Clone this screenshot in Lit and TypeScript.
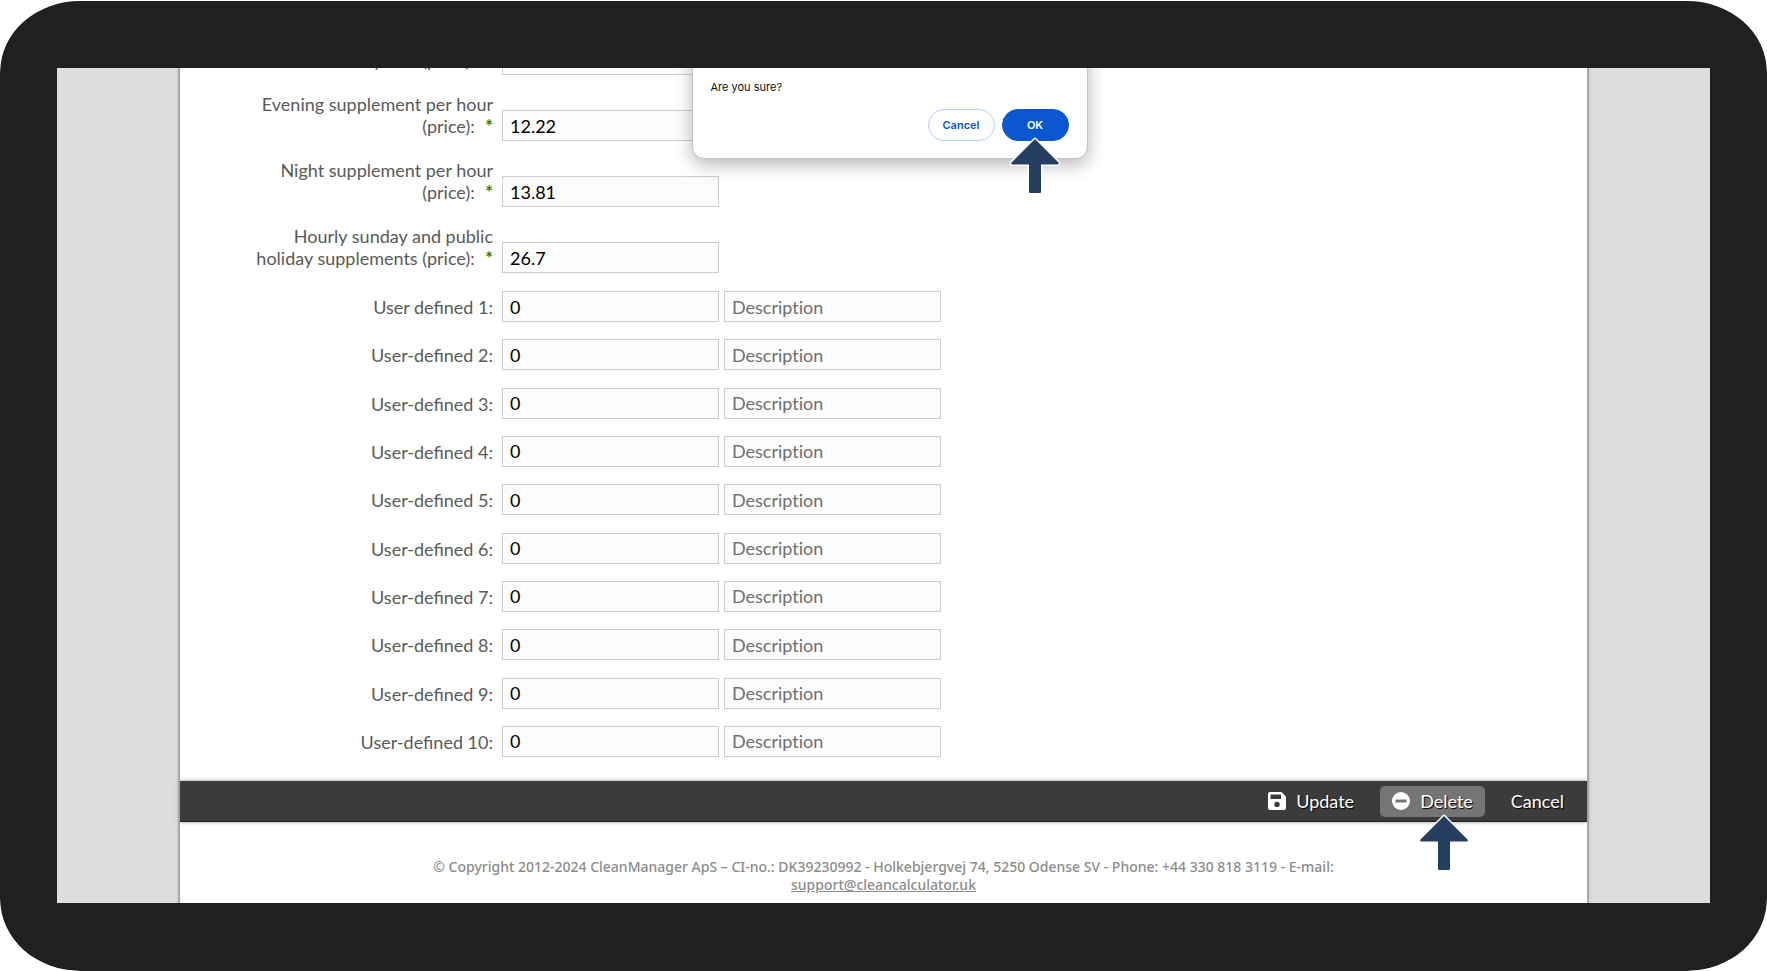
import { LitElement, html, css } from "lit";
import { customElement } from "lit/decorators.js";

interface PriceField {
  id: string;
  lines: string[];
  value: string;
}

const prices: PriceField[] = [
  { id: "hourly", lines: ["Hourly rate (price):"], value: "" },
  { id: "evening", lines: ["Evening supplement per hour", "(price):"], value: "12.22" },
  { id: "night", lines: ["Night supplement per hour", "(price):"], value: "13.81" },
  { id: "sunday", lines: ["Hourly sunday and public", "holiday supplements (price):"], value: "26.7" },
];

const custom = Array.from({ length: 10 }, (_, i) => ({
  id: `custom-${i + 1}`,
  label: i === 0 ? "User defined 1:" : `User-defined ${i + 1}:`,
}));

const pointer = html`
  <svg class="pointer" viewBox="0 0 54 60" width="54" height="60" aria-hidden="true">
    <path
      d="M27 4 L50.5 27.5 Q51.5 29.5 49.5 29.5 H33 V57 Q33 58 32 58 H22 Q21 58 21 57 V29.5 H4.5 Q2.500 29.5 3.5 27.5 Z"
      fill="#263f61" stroke="#fff" stroke-width="3" stroke-linejoin="round" paint-order="stroke" />
  </svg>
`;

const saveIcon = html`
  <svg viewBox="0 0 18 18" width="18" height="18" aria-hidden="true">
    <path fill="currentColor" fill-rule="evenodd"
      d="M2 0 H13.5 L18 4.5 V16 Q18 18 16 18 H2 Q0 18 0 16 V2 Q0 0 2 0 Z M3 2.500 Q2.500 2.500 2.500 3 V6.500 Q2.500 7 3 7 H12.500 Q13 7 13 6.500 V3 Q13 2.500 12.500 2.500 Z M9 9.700 A2.700 2.700 0 1 0 9 15.100 A2.700 2.700 0 1 0 9 9.700 Z" />
  </svg>
`;

const minusIcon = html`
  <svg viewBox="0 0 18 18" width="18" height="18" aria-hidden="true">
    <path fill="currentColor" fill-rule="evenodd"
      d="M9 0 A9 9 0 1 0 9 18 A9 9 0 1 0 9 0 Z M4 7.500 H14 Q14.600 7.500 14.600 8.100 V9.900 Q14.600 10.500 14 10.500 H4 Q3.400 10.500 3.400 9.900 V8.100 Q3.400 7.500 4 7.500 Z" />
  </svg>
`;

@customElement("price-form")
export class PriceForm extends LitElement {
  static styles = css`
    :host { display: flex; flex: 1; min-height: 0; }
    form { display: flex; flex-direction: column; flex: 1; margin-top: -41px; padding-bottom: 24px; }
    .row { display: grid; grid-template-columns: 317px 217px 217px; column-gap: 5px; align-items: end; }
    .tall { min-height: 48px; margin-bottom: 18px; }
    .custom { display: flex; flex-direction: column; justify-content: space-between; flex: 1; }
    label { padding-bottom: 4px; margin-right: 4px; line-height: 22px; text-align: right; color: #5a5a5a; }
    .line { display: block; }
    .star { color: #2f7d12; font-weight: 700; margin-left: 6px; }
    input {
      box-sizing: border-box; width: 100%; height: 31px; margin: 0; padding: 0 7px;
      border: 1px solid #ccc; border-radius: 0; background: #fcfcfc; color: #000; font: inherit;
      font-variant-ligatures: none;
    }
    input::placeholder { color: #707070; opacity: 1; }
  `;

  render() {
    return html`
      <form>
        ${prices.map((f) => html`
          <div class="row tall">
            <label for=${f.id}>
              ${f.lines.map((text, i) => html`
                <span class="line">${text} ${i === f.lines.length - 1 ? html`<span class="star">*</span>` : ""}</span>`)}
            </label>
            <input id=${f.id} .value=${f.value} />
          </div>`)}
        <div class="custom">
          ${custom.map((f) => html`
            <div class="row">
              <label for=${f.id}>${f.label}</label>
              <input id=${f.id} .value=${"0"} />
              <input placeholder="Description" aria-label="${f.label} description" />
            </div>`)}
        </div>
      </form>
    `;
  }
}

@customElement("app-root")
export class AppRoot extends LitElement {
  static styles = css`
    :host { display: block; background: #fff; font: 18px/22px Lato, sans-serif; }
    .frame {
      box-sizing: border-box; display: flex; height: 100vh; padding: 67px 57px 68px;
      background: #221f20; background-clip: padding-box; border-top: 1px solid transparent;
      border-radius: 80px / 72px;
    }
    .screen { position: relative; display: flex; flex: 1; overflow: hidden; padding: 0 123px; background: #ddd; }
    .page { display: flex; flex-direction: column; flex: 1; min-width: 0; background: #fff; box-shadow: 0 0 0 2px #a8a8a8, 0 0 5px 1px #bbb; }
    .bar {
      display: flex; justify-content: flex-end; align-items: center; gap: 14px; flex: none;
      box-sizing: border-box; height: 41px; padding: 0 11px; background: #3b3b3b;
      border-bottom: 1px solid #222; box-shadow: 0 0 4px #999;
    }
    .anchor { position: relative; display: flex; }
    .pointer { position: absolute; top: 26px; left: 50%; margin-left: -27px; pointer-events: none; z-index: 1; }
    .shifted .pointer { margin-left: -15px; }
    .action {
      display: flex; align-items: center; gap: 10px; height: 31px; padding: 0 12px; border: 0;
      border-radius: 5px; background: none; color: #fff; font: inherit; text-shadow: 1px 1px 1px #000;
    }
    .active { background: #757575; }
    footer {
      flex: none; box-sizing: border-box; height: 81px; padding-top: 36px; text-align: center;
      font: 500 14px/18px "Noto Sans", sans-serif; color: #8c8c8c;
    }
    footer a { color: inherit; }
    .dialog {
      position: absolute; top: -20px; left: 50%; margin-left: -192px; box-sizing: border-box;
      width: 396px; height: 111px; padding: 30px 18px 17px; display: flex; flex-direction: column;
      justify-content: space-between; background: #fff; border: 1px solid #c4c4c4; border-radius: 0 0 12px 12px;
      box-shadow: 0 6px 18px rgba(0, 0, 0, 0.28); font: 11px/16px Inter, sans-serif; color: #111;
    }
    .dialog p { margin: 0; }
    .choices { display: flex; justify-content: flex-end; gap: 7px; }
    .choice {
      width: 67px; height: 32px; padding: 0; border: 1px solid #b5cffb; border-radius: 16px;
      background: #fff; color: #0b57d0; font: 600 11px/16px Inter, sans-serif;
    }
    .primary { background: #0b57d0; border-color: #0b57d0; color: #fff; }
  `;

  render() {
    return html`
      <div class="frame">
        <div class="screen">
          <main class="page">
            <price-form></price-form>
            <div class="bar">
              <button class="action">${saveIcon}Update</button>
              <span class="anchor shifted">
                <button class="action active">${minusIcon}Delete</button>
                ${pointer}
              </span>
              <button class="action">Cancel</button>
            </div>
            <footer>
              © Copyright 2012-2024 CleanManager ApS – CI-no.: DK39230992 - Holkebjergvej 74, 5250 Odense SV - Phone: +44 330 818 3119 - E-mail:<br />
              <a href="mailto:support@cleancalculator.uk">support@cleancalculator.uk</a>
            </footer>
          </main>
          <div class="dialog" role="alertdialog" aria-labelledby="question">
            <p id="question">Are you sure?</p>
            <div class="choices">
              <button class="choice">Cancel</button>
              <span class="anchor">
                <button class="choice primary">OK</button>
                ${pointer}
              </span>
            </div>
          </div>
        </div>
      </div>
    `;
  }
}
